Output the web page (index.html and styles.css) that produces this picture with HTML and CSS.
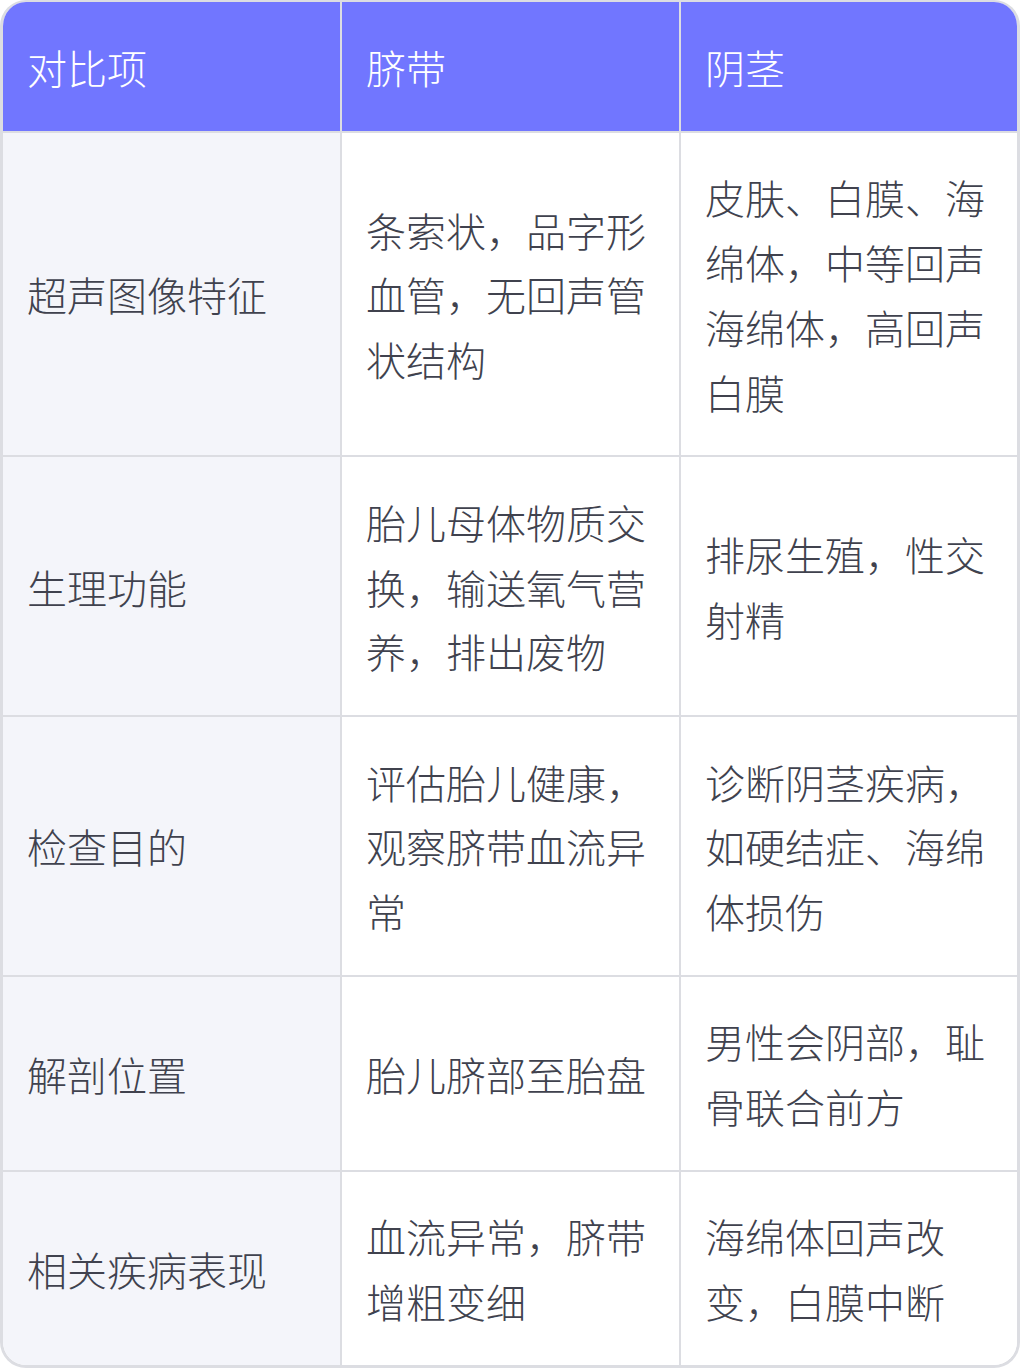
FILE: index.html
```html
<!DOCTYPE html>
<html lang="zh-CN">
<head>
<meta charset="utf-8">
<link rel="stylesheet" href="styles.css">
</head>
<body>
<div class="table">
  <div class="cell head">对比项</div>
  <div class="cell head">脐带</div>
  <div class="cell head last">阴茎</div>

  <div class="cell label">超声图像特征</div>
  <div class="cell">条索状，品字形血管，无回声管状结构</div>
  <div class="cell last">皮肤、白膜、海绵体，中等回声海绵体，高回声白膜</div>

  <div class="cell label">生理功能</div>
  <div class="cell">胎儿母体物质交换，输送氧气营养，排出废物</div>
  <div class="cell last">排尿生殖，性交射精</div>

  <div class="cell label">检查目的</div>
  <div class="cell">评估胎儿健康，观察脐带血流异常</div>
  <div class="cell last">诊断阴茎疾病，如硬结症、海绵体损伤</div>

  <div class="cell label">解剖位置</div>
  <div class="cell">胎儿脐部至胎盘</div>
  <div class="cell last">男性会阴部，耻骨联合前方</div>

  <div class="cell label bottom">相关疾病表现</div>
  <div class="cell bottom">血流异常，脐带增粗变细</div>
  <div class="cell last bottom">海绵体回声改变，白膜中断</div>
</div>
</body>
</html>
```

FILE: styles.css
```css
html, body {
  margin: 0;
  padding: 0;
  background: #ffffff;
}

.table {
  box-sizing: border-box;
  width: 1020px;
  border: 3px solid #dcdde2;
  border-top-width: 2px;
  border-radius: 26px;
  overflow: hidden;
  display: grid;
  grid-template-columns: 339px 339px 1fr;
  font-family: "Noto Sans CJK SC Light", "Noto Sans CJK SC DemiLight", "Noto Sans CJK SC", "Noto Sans", sans-serif;
  font-weight: 300;
  font-size: 40px;
  line-height: 64.75px;
  color: #40424e;
}

.cell {
  display: flex;
  align-items: center;
  padding: 32.5px 24px 31px 24px;
  border-right: 2px solid #dcdde2;
  border-bottom: 2px solid #dcdde2;
  background: #ffffff;
  word-break: break-all;
}

.cell.last {
  border-right: none;
}

.cell.bottom {
  border-bottom: none;
}

.cell.head {
  background: #7176ff;
  color: #ffffff;
  padding-top: 33px;
  padding-bottom: 31px;
}

.cell.label {
  background: #f4f5fa;
}
```
